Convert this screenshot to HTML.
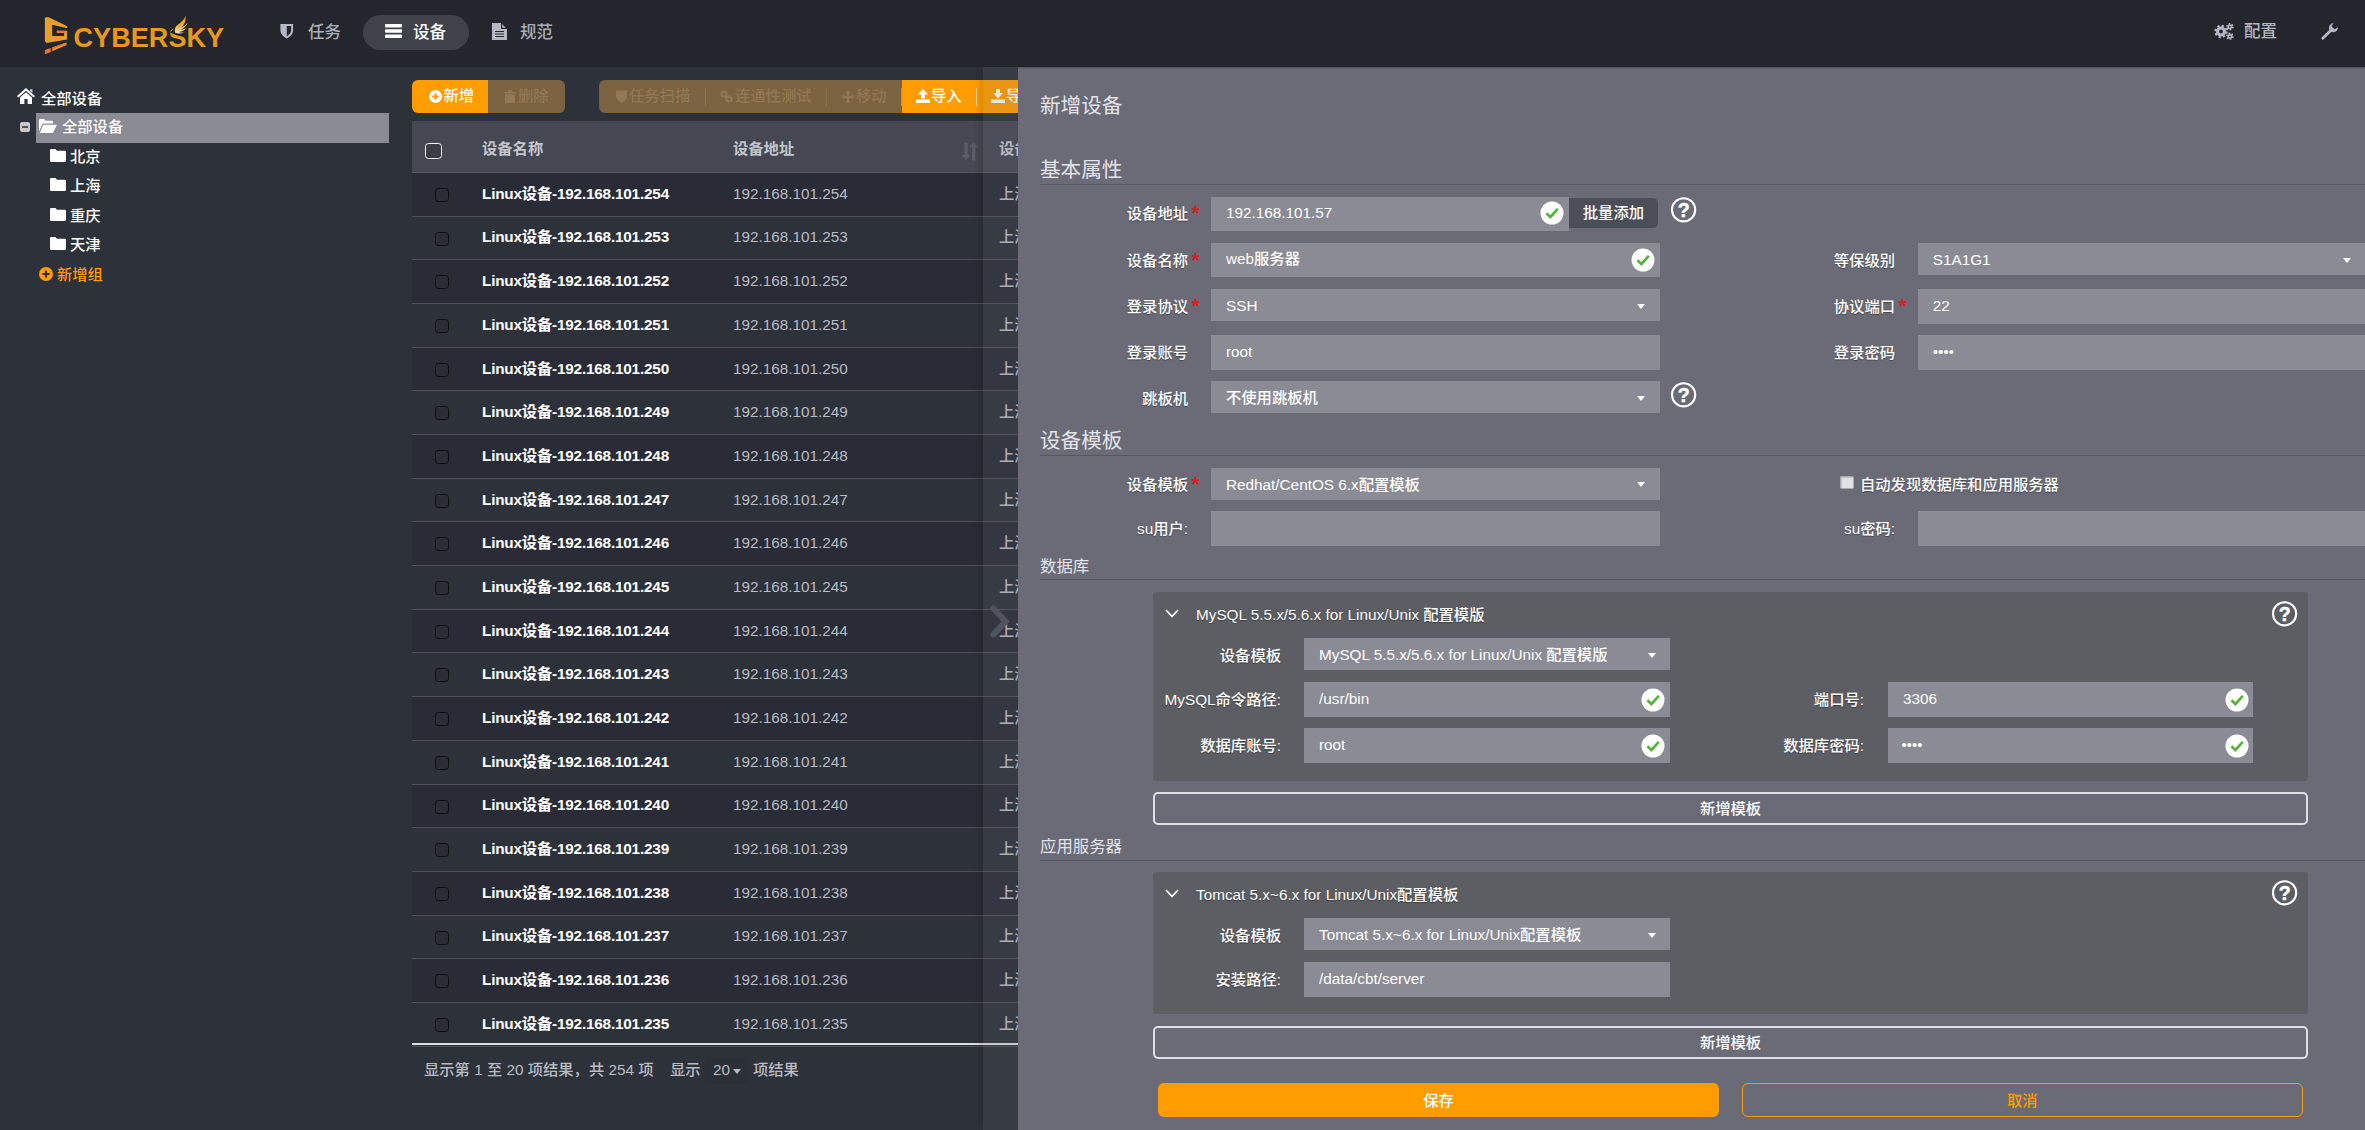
<!DOCTYPE html><html lang="zh-CN"><head><meta charset="utf-8"><title>新增设备</title><style>
*{box-sizing:border-box;margin:0;padding:0}
html,body{width:2365px;height:1130px;overflow:hidden;background:#2d313a}
body{position:relative;font-family:"Liberation Sans","Noto Sans CJK SC",sans-serif;font-size:15.3px;color:#fff;font-weight:500}
.a{position:absolute}
.t{position:absolute;white-space:nowrap;line-height:20px;height:20px}
.b{font-weight:bold}
svg{position:absolute;overflow:visible}
#hdr{left:0;top:0;width:2365px;height:67px;background:#23262d}
#side{left:0;top:67px;width:400px;height:1063px;background:#2d313a}
#panel{left:1018px;top:67px;width:1347px;height:1063px;background:#6b6b77}
.in{position:absolute;background:#8b8b96;height:35px}
.sel{position:absolute;background:#8b8b96;height:32px}
.v{position:absolute;white-space:nowrap;line-height:20px;height:20px;color:#fff;font-size:15.3px}
.lab{position:absolute;white-space:nowrap;line-height:20px;height:20px;text-align:right;color:#fff;font-size:15.3px;text-shadow:0 1px 1px rgba(0,0,0,.35)}
.req{color:#d8201a;text-shadow:none}
.hr{position:absolute;height:1px;background:#56565f;left:1040px;width:1325px}
.sub{position:absolute;background:#5d5e64;border-radius:3px;left:1153px;width:1154.7px}
.ob{position:absolute;left:1153px;width:1155px;height:33px;border:2px solid #dedee3;border-radius:5px;text-align:center;line-height:30px;font-size:15.3px;color:#fff;font-weight:500}
.row{position:absolute;left:412px;width:606px;height:43.68px;border-bottom:1.8px solid #4d505a}
.row.d{background:#292c36}
.cb{position:absolute;width:14px;height:14px;border:1.5px solid #0c0d10;border-radius:3.5px;background:#2a2d35}
.car{position:absolute;width:0;height:0;border-left:4.5px solid transparent;border-right:4.5px solid transparent;border-top:5px solid #fff}
</style></head><body>
<div id="hdr" class="a"></div>
<svg style="left:40px;top:10px" width="80" height="50" viewBox="0 0 1808 1130">
<path d="M110 185 Q110 165 135 165 L200 165 L615 370 L612 412 L275 335 L275 585 L545 585 L545 520 L380 520 L380 470 L610 470 L610 665 L150 745 L110 705 Z" fill="#e79e2c"/>
<path d="M380 470 L575 470 L575 520 L380 520 Z" fill="#e8742a"/>
<path d="M275 850 L600 735 L600 790 L275 935 Z" fill="#e79428"/>
<path d="M275 850 L560 748 L560 775 L275 885 Z" fill="#e8742a"/>
<path d="M110 905 L245 860 L245 950 L110 1000 Z" fill="#e8742a"/>
</svg>
<div class="t b" id="brand" style="left:73.5px;top:21.1px;height:34px;line-height:34px;font-size:27px;letter-spacing:.08px;color:#e8991c">CYBERSKY</div>
<svg style="left:150px;top:8px" width="80" height="50" viewBox="0 0 1808 1130"><defs><linearGradient id="wg" x1="0" y1="0" x2="0" y2="1"><stop offset="0" stop-color="#e8a030"/><stop offset=".55" stop-color="#f0a828"/><stop offset="1" stop-color="#eee6d2"/></linearGradient></defs>
<path d="M455 560 L560 430 L800 150 L870 330 L790 600 L560 600 Z" fill="#23262d"/>
<path d="M800 165 C790 260 700 330 600 400 C560 440 550 500 570 560 C640 590 720 580 770 540 C720 555 680 555 650 545 C730 530 800 490 835 440 C790 470 740 490 700 490 C770 450 830 400 855 320 C820 370 770 410 720 430 C780 370 820 280 800 165 Z" fill="url(#wg)"/></svg>
<div class="a" style="left:363px;top:15px;width:106px;height:35px;border-radius:18px;background:#3f424b"></div>
<svg style="left:280px;top:24px" width="13.5" height="14.5" viewBox="0 0 14 16"><path d="M0 0 H14 V7 C14 11 11 14 7 16 C3 14 0 11 0 7 Z" fill="#b4b8c2"/><path d="M7 2.2 H11.8 V7 C11.8 9.8 9.8 12 7 13.6 Z" fill="#23262d"/></svg>
<div class="t" style="left:308px;top:21.6px;font-size:16.5px;color:#a9adb8">任务</div>
<svg style="left:385px;top:24px" width="17" height="14" viewBox="0 0 17 14"><rect x="0" y="0" width="17" height="3.6" rx=".8" fill="#fff"/><rect x="0" y="5.2" width="17" height="3.6" rx=".8" fill="#fff"/><rect x="0" y="10.4" width="17" height="3.6" rx=".8" fill="#fff"/></svg>
<div class="t" style="left:413px;top:21.6px;font-size:16.5px;color:#fff">设备</div>
<svg style="left:492px;top:23px" width="15" height="17" viewBox="0 0 15 17"><path d="M0 0 H9 L15 6 V17 H0 Z" fill="#b4b8c2"/><path d="M9.6 0 V5.4 H15" fill="none" stroke="#23262d" stroke-width="1.2"/><path d="M3 8.5 H12 M3 11 H12 M3 13.5 H12" stroke="#23262d" stroke-width="1"/></svg>
<div class="t" style="left:520px;top:21.6px;font-size:16.5px;color:#a9adb8">规范</div>
<svg style="left:2213.6px;top:22.7px" width="20" height="18" viewBox="0 0 20 18"><g fill="none" stroke="#b6b9c3"><circle cx="7" cy="8.5" r="3.5" stroke-width="3.2"/><circle cx="7" cy="8.5" r="5.6" stroke-width="2.2" stroke-dasharray="2.2 2.2"/><circle cx="15.9" cy="3.8" r="1.7" stroke-width="1.7"/><circle cx="15.9" cy="3.8" r="3" stroke-width="1.5" stroke-dasharray="1.57 1.57"/><circle cx="15.9" cy="13.3" r="1.7" stroke-width="1.7"/><circle cx="15.9" cy="13.3" r="3" stroke-width="1.5" stroke-dasharray="1.57 1.57"/></g></svg>
<div class="t" style="left:2244px;top:20.8px;font-size:16.5px;color:#b6b9c3">配置</div>
<svg style="left:2321px;top:23.4px" width="18" height="17" viewBox="0 0 18 17"><path d="M1.8 15.2 L10.5 6.8" stroke="#b6b9c3" stroke-width="2.8" stroke-linecap="round"/><path d="M16.9 4.6 A4.5 4.5 0 1 1 12.4 .3 L10.4 3.2 L13.6 6.2 Z" fill="#b6b9c3"/></svg>
<div id="side" class="a"></div>
<svg style="left:17px;top:88px" width="18" height="16" viewBox="0 0 18 16"><path d="M9 0 L18 8 L16.6 9.4 L9 2.8 L1.4 9.4 L0 8 Z M3 9.4 L9 4.3 L15 9.4 V16 H10.6 V11 H7.4 V16 H3 Z M13 1.4 H15.4 V4.6 L13 2.6 Z" fill="#fff"/></svg>
<div class="t" style="left:41px;top:89.4px">全部设备</div>
<div class="a" style="left:35.7px;top:113px;width:353.5px;height:29.5px;background:#8b8b96"></div>
<div class="a" style="left:20px;top:122px;width:10px;height:10px;border-radius:2px;background:#c8c8cc"></div><div class="a" style="left:22px;top:126px;width:6px;height:2px;background:#555"></div>
<svg style="left:39px;top:119px" width="18" height="14" viewBox="0 0 18 14"><path d="M0 1.2 Q0 0 1.2 0 H5 L6.6 1.8 H13 Q14 1.8 14 3 V4.6 H4.6 Q3.6 4.6 3.2 5.6 L0 12.5 Z" fill="#fff"/><path d="M4.4 5.8 H18 L14.4 13 Q14 14 13 14 H.8 Z" fill="#fff"/></svg>
<div class="t" style="left:62px;top:117.4px">全部设备</div>
<svg style="left:50px;top:149px" width="16" height="13" viewBox="0 0 16 13"><path d="M0 1.2 Q0 0 1.2 0 H5.4 L7 1.8 H14.8 Q16 1.8 16 3 V11.8 Q16 13 14.8 13 H1.2 Q0 13 0 11.8 Z" fill="#fff"/></svg>
<div class="t" style="left:70px;top:147px">北京</div>
<svg style="left:50px;top:178px" width="16" height="13" viewBox="0 0 16 13"><path d="M0 1.2 Q0 0 1.2 0 H5.4 L7 1.8 H14.8 Q16 1.8 16 3 V11.8 Q16 13 14.8 13 H1.2 Q0 13 0 11.8 Z" fill="#fff"/></svg>
<div class="t" style="left:70px;top:176px">上海</div>
<svg style="left:50px;top:208px" width="16" height="13" viewBox="0 0 16 13"><path d="M0 1.2 Q0 0 1.2 0 H5.4 L7 1.8 H14.8 Q16 1.8 16 3 V11.8 Q16 13 14.8 13 H1.2 Q0 13 0 11.8 Z" fill="#fff"/></svg>
<div class="t" style="left:70px;top:206px">重庆</div>
<svg style="left:50px;top:237px" width="16" height="13" viewBox="0 0 16 13"><path d="M0 1.2 Q0 0 1.2 0 H5.4 L7 1.8 H14.8 Q16 1.8 16 3 V11.8 Q16 13 14.8 13 H1.2 Q0 13 0 11.8 Z" fill="#fff"/></svg>
<div class="t" style="left:70px;top:235px">天津</div>
<svg style="left:39px;top:267px" width="14" height="14" viewBox="0 0 14 14"><circle cx="7" cy="7" r="7" fill="#ff9c00"/><path d="M7 3.4 V10.6 M3.4 7 H10.6" stroke="#2d313a" stroke-width="2.2"/></svg>
<div class="t" style="left:57px;top:264.5px;color:#ff9c00">新增组</div>
<div class="a" style="left:412px;top:80px;width:76px;height:33px;background:#ff9c00;border-radius:6px 0 0 6px"></div>
<div class="a" style="left:488px;top:80px;width:77px;height:33px;background:#7b6241;border-radius:0 6px 6px 0"></div>
<svg style="left:429px;top:90px" width="13" height="13" viewBox="0 0 14 14"><circle cx="7" cy="7" r="7" fill="#fff"/><path d="M7 3.4 V10.6 M3.4 7 H10.6" stroke="#ff9c00" stroke-width="2.2"/></svg>
<div class="t" style="left:443.5px;top:86.4px">新增</div>
<svg style="left:504px;top:90px" width="12" height="13" viewBox="0 0 12 13"><path d="M0 2 H12 V3.4 H0 Z M4 0 H8 V2 H4 Z M1 4.2 H11 V12 Q11 13 10 13 H2 Q1 13 1 12 Z" fill="#927854"/></svg>
<div class="t" style="left:518px;top:86px;color:#927854">删除</div>
<div class="a" style="left:599px;top:80px;width:303px;height:33px;background:#7b6241;border-radius:6px 0 0 6px"></div>
<div class="a" style="left:902px;top:80px;width:130px;height:33px;background:#ff9c00"></div>
<div class="a" style="left:705px;top:88px;width:1px;height:18px;background:#8f744c"></div><div class="a" style="left:826px;top:88px;width:1px;height:18px;background:#8f744c"></div><div class="a" style="left:900.5px;top:88px;width:1px;height:18px;background:#b8915a"></div><div class="a" style="left:976px;top:88px;width:1px;height:18px;background:#ffd28a"></div>
<svg style="left:616px;top:90px" width="11" height="13" viewBox="0 0 14 16"><path d="M0 0 H14 V7 C14 11 11 14 7 16 C3 14 0 11 0 7 Z" fill="#927854"/></svg>
<div class="t" style="left:629px;top:86px;color:#927854">任务扫描</div>
<svg style="left:720px;top:90px" width="13" height="13" viewBox="0 0 13 13"><circle cx="4" cy="4" r="2.6" fill="none" stroke="#927854" stroke-width="2"/><circle cx="9" cy="9" r="2.6" fill="none" stroke="#927854" stroke-width="2"/></svg>
<div class="t" style="left:735px;top:86px;color:#927854">连通性测试</div>
<svg style="left:841px;top:90px" width="14" height="14" viewBox="0 0 14 14"><path d="M7 0 L9.6 3 H8 V6 H11 V4.4 L14 7 L11 9.6 V8 H8 V11 H9.6 L7 14 L4.4 11 H6 V8 H3 V9.6 L0 7 L3 4.4 V6 H6 V3 H4.4 Z" fill="#927854"/></svg>
<div class="t" style="left:856px;top:86px;color:#927854">移动</div>
<svg style="left:916px;top:89px" width="14" height="14" viewBox="0 0 14 14"><path d="M7 0 L12 5.4 H9 V9.4 H5 V5.4 H2 Z M0 10.6 H14 V14 H0 Z" fill="#fff"/></svg>
<div class="t" style="left:931px;top:86px">导入</div>
<svg style="left:991px;top:89px" width="14" height="14" viewBox="0 0 14 14"><path d="M7 9.4 L12 4 H9 V0 H5 V4 H2 Z M0 10.6 H14 V14 H0 Z" fill="#fff"/></svg>
<div class="t" style="left:1006px;top:86px">导出</div>
<div class="a" style="left:412px;top:121px;width:606px;height:52px;background:#454852;border-bottom:1.5px solid #54575f"></div>
<div class="cb" style="left:425px;top:142.5px;width:16.5px;height:16.5px;border-color:#f2f2f2;background:#3a3d46"></div>
<div class="t b" style="left:482px;top:139px;color:#c3c5cc">设备名称</div>
<div class="t b" style="left:733px;top:139px;color:#c3c5cc">设备地址</div>
<div class="t b" style="left:999px;top:139px;color:#c3c5cc">设备</div>
<svg style="left:961px;top:142px" width="18" height="19" viewBox="961 142 18 19"><path d="M964.4 142.6 H967.6 V155 H970.6 L966.1 160.4 L961.6 155 H964.4 Z M972 160.4 H975.3 V147.2 H977.8 L973.6 142.4 L969.4 147.2 H972 Z" fill="#5a5d67"/></svg>
<div class="row d" style="top:173.00px"><div class="cb" style="left:22.5px;top:15px"></div><div class="t b" style="left:70px;top:10.8px;letter-spacing:-.19px">Linux设备-192.168.101.254</div><div class="t" style="left:321px;top:10.8px;color:#b9bbc3">192.168.101.254</div><div class="t" style="left:587px;top:10.8px;color:#b9bbc3">上海</div></div>
<div class="row" style="top:216.68px"><div class="cb" style="left:22.5px;top:15px"></div><div class="t b" style="left:70px;top:10.8px;letter-spacing:-.19px">Linux设备-192.168.101.253</div><div class="t" style="left:321px;top:10.8px;color:#b9bbc3">192.168.101.253</div><div class="t" style="left:587px;top:10.8px;color:#b9bbc3">上海</div></div>
<div class="row d" style="top:260.36px"><div class="cb" style="left:22.5px;top:15px"></div><div class="t b" style="left:70px;top:10.8px;letter-spacing:-.19px">Linux设备-192.168.101.252</div><div class="t" style="left:321px;top:10.8px;color:#b9bbc3">192.168.101.252</div><div class="t" style="left:587px;top:10.8px;color:#b9bbc3">上海</div></div>
<div class="row" style="top:304.04px"><div class="cb" style="left:22.5px;top:15px"></div><div class="t b" style="left:70px;top:10.8px;letter-spacing:-.19px">Linux设备-192.168.101.251</div><div class="t" style="left:321px;top:10.8px;color:#b9bbc3">192.168.101.251</div><div class="t" style="left:587px;top:10.8px;color:#b9bbc3">上海</div></div>
<div class="row d" style="top:347.72px"><div class="cb" style="left:22.5px;top:15px"></div><div class="t b" style="left:70px;top:10.8px;letter-spacing:-.19px">Linux设备-192.168.101.250</div><div class="t" style="left:321px;top:10.8px;color:#b9bbc3">192.168.101.250</div><div class="t" style="left:587px;top:10.8px;color:#b9bbc3">上海</div></div>
<div class="row" style="top:391.40px"><div class="cb" style="left:22.5px;top:15px"></div><div class="t b" style="left:70px;top:10.8px;letter-spacing:-.19px">Linux设备-192.168.101.249</div><div class="t" style="left:321px;top:10.8px;color:#b9bbc3">192.168.101.249</div><div class="t" style="left:587px;top:10.8px;color:#b9bbc3">上海</div></div>
<div class="row d" style="top:435.08px"><div class="cb" style="left:22.5px;top:15px"></div><div class="t b" style="left:70px;top:10.8px;letter-spacing:-.19px">Linux设备-192.168.101.248</div><div class="t" style="left:321px;top:10.8px;color:#b9bbc3">192.168.101.248</div><div class="t" style="left:587px;top:10.8px;color:#b9bbc3">上海</div></div>
<div class="row" style="top:478.76px"><div class="cb" style="left:22.5px;top:15px"></div><div class="t b" style="left:70px;top:10.8px;letter-spacing:-.19px">Linux设备-192.168.101.247</div><div class="t" style="left:321px;top:10.8px;color:#b9bbc3">192.168.101.247</div><div class="t" style="left:587px;top:10.8px;color:#b9bbc3">上海</div></div>
<div class="row d" style="top:522.44px"><div class="cb" style="left:22.5px;top:15px"></div><div class="t b" style="left:70px;top:10.8px;letter-spacing:-.19px">Linux设备-192.168.101.246</div><div class="t" style="left:321px;top:10.8px;color:#b9bbc3">192.168.101.246</div><div class="t" style="left:587px;top:10.8px;color:#b9bbc3">上海</div></div>
<div class="row" style="top:566.12px"><div class="cb" style="left:22.5px;top:15px"></div><div class="t b" style="left:70px;top:10.8px;letter-spacing:-.19px">Linux设备-192.168.101.245</div><div class="t" style="left:321px;top:10.8px;color:#b9bbc3">192.168.101.245</div><div class="t" style="left:587px;top:10.8px;color:#b9bbc3">上海</div></div>
<div class="row d" style="top:609.80px"><div class="cb" style="left:22.5px;top:15px"></div><div class="t b" style="left:70px;top:10.8px;letter-spacing:-.19px">Linux设备-192.168.101.244</div><div class="t" style="left:321px;top:10.8px;color:#b9bbc3">192.168.101.244</div><div class="t" style="left:587px;top:10.8px;color:#b9bbc3">上海</div></div>
<div class="row" style="top:653.48px"><div class="cb" style="left:22.5px;top:15px"></div><div class="t b" style="left:70px;top:10.8px;letter-spacing:-.19px">Linux设备-192.168.101.243</div><div class="t" style="left:321px;top:10.8px;color:#b9bbc3">192.168.101.243</div><div class="t" style="left:587px;top:10.8px;color:#b9bbc3">上海</div></div>
<div class="row d" style="top:697.16px"><div class="cb" style="left:22.5px;top:15px"></div><div class="t b" style="left:70px;top:10.8px;letter-spacing:-.19px">Linux设备-192.168.101.242</div><div class="t" style="left:321px;top:10.8px;color:#b9bbc3">192.168.101.242</div><div class="t" style="left:587px;top:10.8px;color:#b9bbc3">上海</div></div>
<div class="row" style="top:740.84px"><div class="cb" style="left:22.5px;top:15px"></div><div class="t b" style="left:70px;top:10.8px;letter-spacing:-.19px">Linux设备-192.168.101.241</div><div class="t" style="left:321px;top:10.8px;color:#b9bbc3">192.168.101.241</div><div class="t" style="left:587px;top:10.8px;color:#b9bbc3">上海</div></div>
<div class="row d" style="top:784.52px"><div class="cb" style="left:22.5px;top:15px"></div><div class="t b" style="left:70px;top:10.8px;letter-spacing:-.19px">Linux设备-192.168.101.240</div><div class="t" style="left:321px;top:10.8px;color:#b9bbc3">192.168.101.240</div><div class="t" style="left:587px;top:10.8px;color:#b9bbc3">上海</div></div>
<div class="row" style="top:828.20px"><div class="cb" style="left:22.5px;top:15px"></div><div class="t b" style="left:70px;top:10.8px;letter-spacing:-.19px">Linux设备-192.168.101.239</div><div class="t" style="left:321px;top:10.8px;color:#b9bbc3">192.168.101.239</div><div class="t" style="left:587px;top:10.8px;color:#b9bbc3">上海</div></div>
<div class="row d" style="top:871.88px"><div class="cb" style="left:22.5px;top:15px"></div><div class="t b" style="left:70px;top:10.8px;letter-spacing:-.19px">Linux设备-192.168.101.238</div><div class="t" style="left:321px;top:10.8px;color:#b9bbc3">192.168.101.238</div><div class="t" style="left:587px;top:10.8px;color:#b9bbc3">上海</div></div>
<div class="row" style="top:915.56px"><div class="cb" style="left:22.5px;top:15px"></div><div class="t b" style="left:70px;top:10.8px;letter-spacing:-.19px">Linux设备-192.168.101.237</div><div class="t" style="left:321px;top:10.8px;color:#b9bbc3">192.168.101.237</div><div class="t" style="left:587px;top:10.8px;color:#b9bbc3">上海</div></div>
<div class="row d" style="top:959.24px"><div class="cb" style="left:22.5px;top:15px"></div><div class="t b" style="left:70px;top:10.8px;letter-spacing:-.19px">Linux设备-192.168.101.236</div><div class="t" style="left:321px;top:10.8px;color:#b9bbc3">192.168.101.236</div><div class="t" style="left:587px;top:10.8px;color:#b9bbc3">上海</div></div>
<div class="row" style="top:1002.92px"><div class="cb" style="left:22.5px;top:15px"></div><div class="t b" style="left:70px;top:10.8px;letter-spacing:-.19px">Linux设备-192.168.101.235</div><div class="t" style="left:321px;top:10.8px;color:#b9bbc3">192.168.101.235</div><div class="t" style="left:587px;top:10.8px;color:#b9bbc3">上海</div></div>
<div class="a" style="left:412px;top:1043px;width:606px;height:2px;background:#dcdde2"></div>
<div class="t" style="left:424px;top:1060px;color:#b9bbc3">显示第 1 至 20 项结果，共 254 项</div>
<div class="t" style="left:670px;top:1060px;color:#b9bbc3">显示</div>
<div class="a" style="left:705px;top:1057px;width:43px;height:27px;background:#2b2f37"></div>
<div class="t" style="left:713px;top:1060px;color:#b9bbc3">20</div>
<div class="car" style="left:733px;top:1069px;border-top-color:#b9bbc3;border-left-width:4px;border-right-width:4px"></div>
<div class="t" style="left:753px;top:1060px;color:#b9bbc3">项结果</div>
<div class="a" style="left:983px;top:67px;width:35px;height:1063px;background:rgba(115,115,122,.16);box-shadow:-6px 0 6px -2px rgba(0,0,0,.12)"></div>
<svg style="left:990px;top:604.5px" width="19" height="33" viewBox="0 0 19 33"><path d="M3.4 3.4 L15.6 16.5 L3.4 29.6" fill="none" stroke="#50535d" stroke-width="6" stroke-linejoin="miter" stroke-linecap="round"/></svg>
<div id="panel" class="a"></div>
<div class="a" style="left:1018px;top:67px;width:1347px;height:2px;background:linear-gradient(#4a4b55,#6b6b77)"></div>
<div class="t" style="left:1040px;top:90.6px;height:30px;line-height:30px;font-size:20.6px;font-weight:400;color:#e3e3ea">新增设备</div>
<div class="t" style="left:1040px;top:154.5px;height:30px;line-height:30px;font-size:20.6px;font-weight:400;color:#e3e3ea">基本属性</div>
<div class="hr" style="top:184px"></div>
<div class="lab" style="left:888px;width:300px;top:204.2px">设备地址</div>
<div class="t req b" style="left:1191.6px;top:203.0px;font-size:21px">*</div>
<div class="in" style="left:1211.0px;top:196.5px;width:357.5px;height:34.5px"></div>
<div class="v" style="left:1226.0px;top:203.2px">192.168.101.57</div>
<svg style="left:1539.5px;top:201.0px" width="24" height="24" viewBox="0 0 24 24"><circle cx="12" cy="12" r="11.5" fill="#fff"/><path d="M6.4 12.3 L10.4 16 L17.8 7.8" fill="none" stroke="#58b23c" stroke-width="2.7"/></svg>
<div class="a" style="left:1568.5px;top:198px;width:89px;height:30px;background:#4b4e58;border-radius:0 5px 5px 0"></div>
<div class="t" style="left:1582.8px;top:203px">批量添加</div>
<svg style="left:1670.5px;top:197.0px" width="26" height="26" viewBox="0 0 26 26"><circle cx="12.6" cy="12.8" r="11.6" fill="none" stroke="#fff" stroke-width="2.1"/><text x="12.8" y="19.6" text-anchor="middle" font-family="Liberation Sans, sans-serif" font-weight="bold" font-size="19.5" fill="#fff" stroke="#fff" stroke-width=".5">?</text></svg>
<div class="lab" style="left:888px;width:300px;top:251.2px">设备名称</div>
<div class="t req b" style="left:1191.6px;top:250.0px;font-size:21px">*</div>
<div class="in" style="left:1211.0px;top:243.0px;width:449.0px;height:34.0px"></div>
<div class="v" style="left:1226.0px;top:249.4px">web服务器</div>
<svg style="left:1631.0px;top:248.0px" width="24" height="24" viewBox="0 0 24 24"><circle cx="12" cy="12" r="11.5" fill="#fff"/><path d="M6.4 12.3 L10.4 16 L17.8 7.8" fill="none" stroke="#58b23c" stroke-width="2.7"/></svg>
<div class="lab" style="left:1595px;width:300px;top:251.2px">等保级别</div>
<div class="sel" style="left:1917.8px;top:243.0px;width:450.0px;height:32.0px"></div>
<div class="v" style="left:1932.8px;top:250.2px">S1A1G1</div>
<div class="car" style="left:2343.0px;top:258.0px"></div>
<div class="lab" style="left:888px;width:300px;top:297.2px">登录协议</div>
<div class="t req b" style="left:1191.6px;top:296.0px;font-size:21px">*</div>
<div class="sel" style="left:1211.0px;top:289.0px;width:449.0px;height:32.0px"></div>
<div class="v" style="left:1226.0px;top:296.2px">SSH</div>
<div class="car" style="left:1637.0px;top:304.0px"></div>
<div class="lab" style="left:1595px;width:300px;top:297.2px">协议端口</div>
<div class="t req b" style="left:1898.6px;top:296.0px;font-size:21px">*</div>
<div class="in" style="left:1917.8px;top:289.0px;width:450.0px;height:34.5px"></div>
<div class="v" style="left:1932.8px;top:295.6px">22</div>
<div class="lab" style="left:888px;width:300px;top:343.2px">登录账号</div>
<div class="in" style="left:1211.0px;top:335.0px;width:449.0px;height:35.0px"></div>
<div class="v" style="left:1226.0px;top:341.9px">root</div>
<div class="lab" style="left:1595px;width:300px;top:343.2px">登录密码</div>
<div class="in" style="left:1917.8px;top:335.0px;width:450.0px;height:35.0px"></div>
<div class="v" style="left:1933.0px;top:341.5px;font-size:14.5px;letter-spacing:.2px">••••</div>
<div class="lab" style="left:888px;width:300px;top:389.2px">跳板机</div>
<div class="sel" style="left:1211.0px;top:381.0px;width:449.0px;height:32.0px"></div>
<div class="v" style="left:1226.0px;top:388.2px">不使用跳板机</div>
<div class="car" style="left:1637.0px;top:396.0px"></div>
<svg style="left:1670.5px;top:382.0px" width="26" height="26" viewBox="0 0 26 26"><circle cx="12.6" cy="12.8" r="11.6" fill="none" stroke="#fff" stroke-width="2.1"/><text x="12.8" y="19.6" text-anchor="middle" font-family="Liberation Sans, sans-serif" font-weight="bold" font-size="19.5" fill="#fff" stroke="#fff" stroke-width=".5">?</text></svg>
<div class="t" style="left:1040px;top:426px;height:30px;line-height:30px;font-size:20.6px;font-weight:400;color:#e3e3ea">设备模板</div>
<div class="hr" style="top:455px"></div>
<div class="lab" style="left:888px;width:300px;top:475.2px">设备模板</div>
<div class="t req b" style="left:1191.6px;top:474.0px;font-size:21px">*</div>
<div class="sel" style="left:1211.0px;top:468.0px;width:449.0px;height:32.0px"></div>
<div class="v" style="left:1226.0px;top:475.2px">Redhat/CentOS 6.x配置模板</div>
<div class="car" style="left:1637.0px;top:482.0px"></div>
<div class="a" style="left:1840px;top:475.5px;width:13.5px;height:13.5px;background:#e2e2e6;border:1px solid #a9a9b2;border-radius:1.5px;box-shadow:inset 1px 1px 1px rgba(0,0,0,.15)"></div>
<div class="lab" style="left:1860px;top:475.2px;text-align:left">自动发现数据库和应用服务器</div>
<div class="lab" style="left:888px;width:300px;top:519.2px">su用户:</div>
<div class="in" style="left:1211.0px;top:511.0px;width:449.0px;height:34.5px"></div>
<div class="lab" style="left:1595px;width:300px;top:519.2px">su密码:</div>
<div class="in" style="left:1917.8px;top:511.0px;width:450.0px;height:34.5px"></div>
<div class="t" style="left:1040px;top:553.8px;height:24px;line-height:24px;font-size:16.4px;font-weight:400;color:#e3e3ea">数据库</div>
<div class="hr" style="top:579.2px"></div>
<div class="sub" style="top:592px;height:189px"></div>
<svg style="left:1164.6px;top:609.0px" width="14" height="9" viewBox="0 0 14 9"><path d="M1 1 L7 7.5 L13 1" fill="none" stroke="#fff" stroke-width="1.7"/></svg>
<div class="lab" style="left:1196px;top:604.7px;text-align:left">MySQL 5.5.x/5.6.x for Linux/Unix 配置模版</div>
<svg style="left:2271.5px;top:600.5px" width="26" height="26" viewBox="0 0 26 26"><circle cx="12.6" cy="12.8" r="11.6" fill="none" stroke="#fff" stroke-width="2.1"/><text x="12.8" y="19.6" text-anchor="middle" font-family="Liberation Sans, sans-serif" font-weight="bold" font-size="19.5" fill="#fff" stroke="#fff" stroke-width=".5">?</text></svg>
<div class="lab" style="left:981px;width:300px;top:646.2px">设备模板</div>
<div class="sel" style="left:1304.0px;top:638.0px;width:366.0px;height:32.0px"></div>
<div class="v" style="left:1319.0px;top:645.2px">MySQL 5.5.x/5.6.x for Linux/Unix 配置模版</div>
<div class="car" style="left:1647.5px;top:653.0px"></div>
<div class="lab" style="left:981px;width:300px;top:690.2px">MySQL命令路径:</div>
<div class="in" style="left:1304.0px;top:682.0px;width:366.0px;height:34.5px"></div>
<div class="v" style="left:1319.0px;top:688.6px">/usr/bin</div>
<svg style="left:1641.0px;top:687.5px" width="24" height="24" viewBox="0 0 24 24"><circle cx="12" cy="12" r="11.5" fill="#fff"/><path d="M6.4 12.3 L10.4 16 L17.8 7.8" fill="none" stroke="#58b23c" stroke-width="2.7"/></svg>
<div class="lab" style="left:1564px;width:300px;top:690.2px">端口号:</div>
<div class="in" style="left:1888.0px;top:682.0px;width:365.0px;height:34.5px"></div>
<div class="v" style="left:1903.0px;top:688.6px">3306</div>
<svg style="left:2224.5px;top:687.5px" width="24" height="24" viewBox="0 0 24 24"><circle cx="12" cy="12" r="11.5" fill="#fff"/><path d="M6.4 12.3 L10.4 16 L17.8 7.8" fill="none" stroke="#58b23c" stroke-width="2.7"/></svg>
<div class="lab" style="left:981px;width:300px;top:736.2px">数据库账号:</div>
<div class="in" style="left:1304.0px;top:728.0px;width:366.0px;height:34.5px"></div>
<div class="v" style="left:1319.0px;top:734.6px">root</div>
<svg style="left:1641.0px;top:733.5px" width="24" height="24" viewBox="0 0 24 24"><circle cx="12" cy="12" r="11.5" fill="#fff"/><path d="M6.4 12.3 L10.4 16 L17.8 7.8" fill="none" stroke="#58b23c" stroke-width="2.7"/></svg>
<div class="lab" style="left:1564px;width:300px;top:736.2px">数据库密码:</div>
<div class="in" style="left:1888.0px;top:728.0px;width:365.0px;height:34.5px"></div>
<div class="v" style="left:1901.5px;top:734.5px;font-size:14.5px;letter-spacing:.2px">••••</div>
<svg style="left:2224.5px;top:733.5px" width="24" height="24" viewBox="0 0 24 24"><circle cx="12" cy="12" r="11.5" fill="#fff"/><path d="M6.4 12.3 L10.4 16 L17.8 7.8" fill="none" stroke="#58b23c" stroke-width="2.7"/></svg>
<div class="ob" style="top:792px">新增模板</div>
<div class="t" style="left:1040px;top:833.8px;height:24px;line-height:24px;font-size:16.4px;font-weight:400;color:#e3e3ea">应用服务器</div>
<div class="hr" style="top:859.5px"></div>
<div class="sub" style="top:872px;height:142px"></div>
<svg style="left:1164.6px;top:889.0px" width="14" height="9" viewBox="0 0 14 9"><path d="M1 1 L7 7.5 L13 1" fill="none" stroke="#fff" stroke-width="1.7"/></svg>
<div class="lab" style="left:1196px;top:884.7px;text-align:left">Tomcat 5.x~6.x for Linux/Unix配置模板</div>
<svg style="left:2271.5px;top:880.0px" width="26" height="26" viewBox="0 0 26 26"><circle cx="12.6" cy="12.8" r="11.6" fill="none" stroke="#fff" stroke-width="2.1"/><text x="12.8" y="19.6" text-anchor="middle" font-family="Liberation Sans, sans-serif" font-weight="bold" font-size="19.5" fill="#fff" stroke="#fff" stroke-width=".5">?</text></svg>
<div class="lab" style="left:981px;width:300px;top:926.2px">设备模板</div>
<div class="sel" style="left:1304.0px;top:918.0px;width:366.0px;height:32.0px"></div>
<div class="v" style="left:1319.0px;top:925.2px">Tomcat 5.x~6.x for Linux/Unix配置模板</div>
<div class="car" style="left:1647.5px;top:933.0px"></div>
<div class="lab" style="left:981px;width:300px;top:970.2px">安装路径:</div>
<div class="in" style="left:1304.0px;top:962.0px;width:366.0px;height:34.5px"></div>
<div class="v" style="left:1319.0px;top:968.6px">/data/cbt/server</div>
<div class="ob" style="top:1026px">新增模板</div>
<div class="a" style="left:1158px;top:1082.5px;width:561px;height:34.5px;background:#ff9c00;border-radius:6px;text-align:center;line-height:36px;font-size:15.3px;color:#fff">保存</div>
<div class="a" style="left:1741.5px;top:1082.5px;width:561.5px;height:34.5px;border:1.5px solid #ff9c00;border-radius:6px;text-align:center;line-height:33px;font-size:15.3px;color:#ff9c00">取消</div>
</body></html>
